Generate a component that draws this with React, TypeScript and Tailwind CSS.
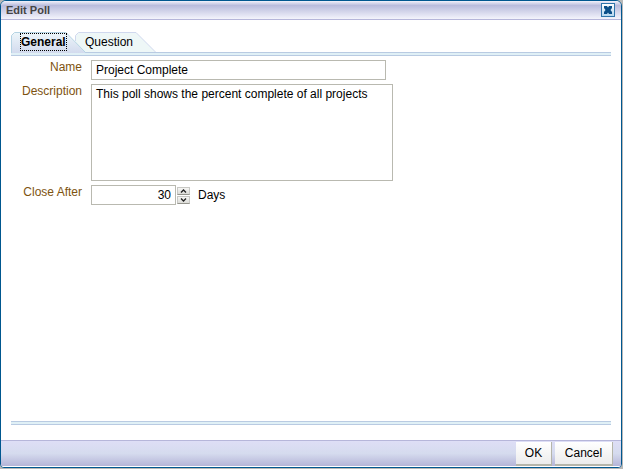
import { useState } from "react";

const TABS = ["General", "Question"];

function TabShape({ active }: { active: boolean }) {
  return active ? (
    <svg className="absolute left-0 top-0" width="76" height="21" aria-hidden="true">
      <defs>
        <linearGradient id="tab" x1="0" y1="0" x2="0" y2="1">
          <stop offset="0" stopColor="#edf6fa" />
          <stop offset="1" stopColor="#d3dbee" />
        </linearGradient>
      </defs>
      <path d="M0.5 21V3.5L3.5 0.5H55L74.5 21Z" fill="url(#tab)" />
      <path d="M0.5 21V3.5L3.5 0.5H55L74.5 20.5" fill="none" stroke="#b5d3e3" />
    </svg>
  ) : (
    <svg className="absolute left-0 top-0" width="82" height="21" aria-hidden="true">
      <path d="M0.5 20V3.5L3.5 0.5H61L80.5 20Z" fill="#eef7f7" />
      <path d="M0.5 9V3.5L3.5 0.5H61L80.5 20" fill="none" stroke="#d0d8ee" />
    </svg>
  );
}

function Rule() {
  return <div className="h-1 shrink-0 border-y border-[#b9cbe2] bg-[#e0f0f6]" />;
}

function StepButton({ label, path, onClick }: { label: string; path: string; onClick: () => void }) {
  return (
    <button
      type="button"
      aria-label={label}
      onClick={onClick}
      className="flex h-2 w-[13px] items-center justify-center border border-[#c8c8c4] border-b-[#96968e] bg-linear-to-b from-[#f6f6f4] to-[#dcdcd8]"
    >
      <svg width="7" height="4" viewBox="0 0 7 4" className="shrink-0" aria-hidden="true">
        <path d={path} fill="none" stroke="#222" strokeWidth="1.3" />
      </svg>
    </button>
  );
}

const label = "pr-[9px] text-right leading-[14px] text-[#7e5310]";
const field = "border border-[#b9b9b0] bg-white px-1 text-black outline-none";
const action =
  "h-6 border-b-2 border-r border-[#b5b5aa] bg-linear-to-b from-white to-[#ececec] text-black";

export default function App() {
  const [tab, setTab] = useState("General");
  const [days, setDays] = useState(30);

  return (
    <div className="h-screen bg-[#b8b8b8] pb-px pr-px font-['Liberation_Sans',Arial,sans-serif] text-[12px] text-black">
      <div
        role="dialog"
        aria-labelledby="title"
        className="flex h-full flex-col overflow-hidden rounded-t-md rounded-b-sm border border-[#00578f] bg-white"
      >
        <header className="flex h-[19px] shrink-0 items-center justify-between border-b border-[#b6b6da] bg-linear-to-b from-[#f2f2fb] via-[#b9bcdc] via-25% to-[#f4f4fc] pl-[5px] pr-1.5">
          <h1 id="title" className="text-[11px] font-bold leading-4 text-[#444]">
            Edit Poll
          </h1>
          <button
            type="button"
            aria-label="Close"
            className="flex size-3.5 items-center justify-center border border-[#2f75aa] bg-linear-to-b from-white to-[#b5d6ee]"
          >
            <svg width="10" height="8" viewBox="0 0 10 8" className="shrink-0" aria-hidden="true">
              <path d="M1 0H4L5 1.5L6 0H9V2L7.5 4L9 6V8H6L5 6.5L4 8H1V6L2.5 4L1 2Z" fill="#0b4f88" />
            </svg>
          </button>
        </header>

        <main className="flex min-h-0 flex-1 flex-col px-2.5 pb-[15px] pt-3">
          <div role="tablist" className="flex h-5 shrink-0">
            {TABS.map((name) => (
              <button
                key={name}
                type="button"
                role="tab"
                aria-selected={tab === name}
                onClick={() => setTab(name)}
                className={
                  "relative flex h-5 w-16 items-center px-[9px] " + (tab === name ? "z-10 font-bold" : "")
                }
              >
                <TabShape active={tab === name} />
                <span
                  className={
                    "relative border border-dotted leading-4 " +
                    (tab === name ? "border-black" : "border-transparent")
                  }
                >
                  {name}
                </span>
              </button>
            ))}
          </div>
          <Rule />

          <div className="grid flex-1 grid-cols-[80px_1fr] content-start gap-y-1 pt-1">
            <label htmlFor="name" className={label}>
              Name
            </label>
            <div>
              <input id="name" defaultValue="Project Complete" className={field + " block h-5 w-full max-w-[295px]"} />
            </div>
            <label htmlFor="description" className={label}>
              Description
            </label>
            <div>
              <textarea
                id="description"
                defaultValue="This poll shows the percent complete of all projects"
                className={field + " block h-[97px] w-full max-w-[302px] resize-none py-px leading-4"}
              />
            </div>
            <label htmlFor="days" className={label}>
              Close After
            </label>
            <div className="flex items-center">
              <input
                id="days"
                value={days}
                onChange={(e) => setDays(Number(e.target.value) || 0)}
                className={field + " h-5 w-[85px] text-right"}
              />
              <div className="ml-px mr-2 flex flex-col gap-px">
                <StepButton label="Increase" path="M1 3.5L3.5 1L6 3.5" onClick={() => setDays(days + 1)} />
                <StepButton label="Decrease" path="M1 0.5L3.5 3L6 0.5" onClick={() => setDays(days - 1)} />
              </div>
              <span>Days</span>
            </div>
          </div>
          <Rule />
        </main>

        <footer className="flex h-[27px] shrink-0 justify-end gap-[3px] border-b border-t border-b-white border-t-[#b6b6da] bg-linear-to-b from-[#dedef6] via-[#d5dbee] to-[#b5b5d8] px-2 pt-px">
          <button type="button" className={action + " w-9"}>
            OK
          </button>
          <button type="button" className={action + " w-[58px]"}>
            Cancel
          </button>
        </footer>
      </div>
    </div>
  );
}
